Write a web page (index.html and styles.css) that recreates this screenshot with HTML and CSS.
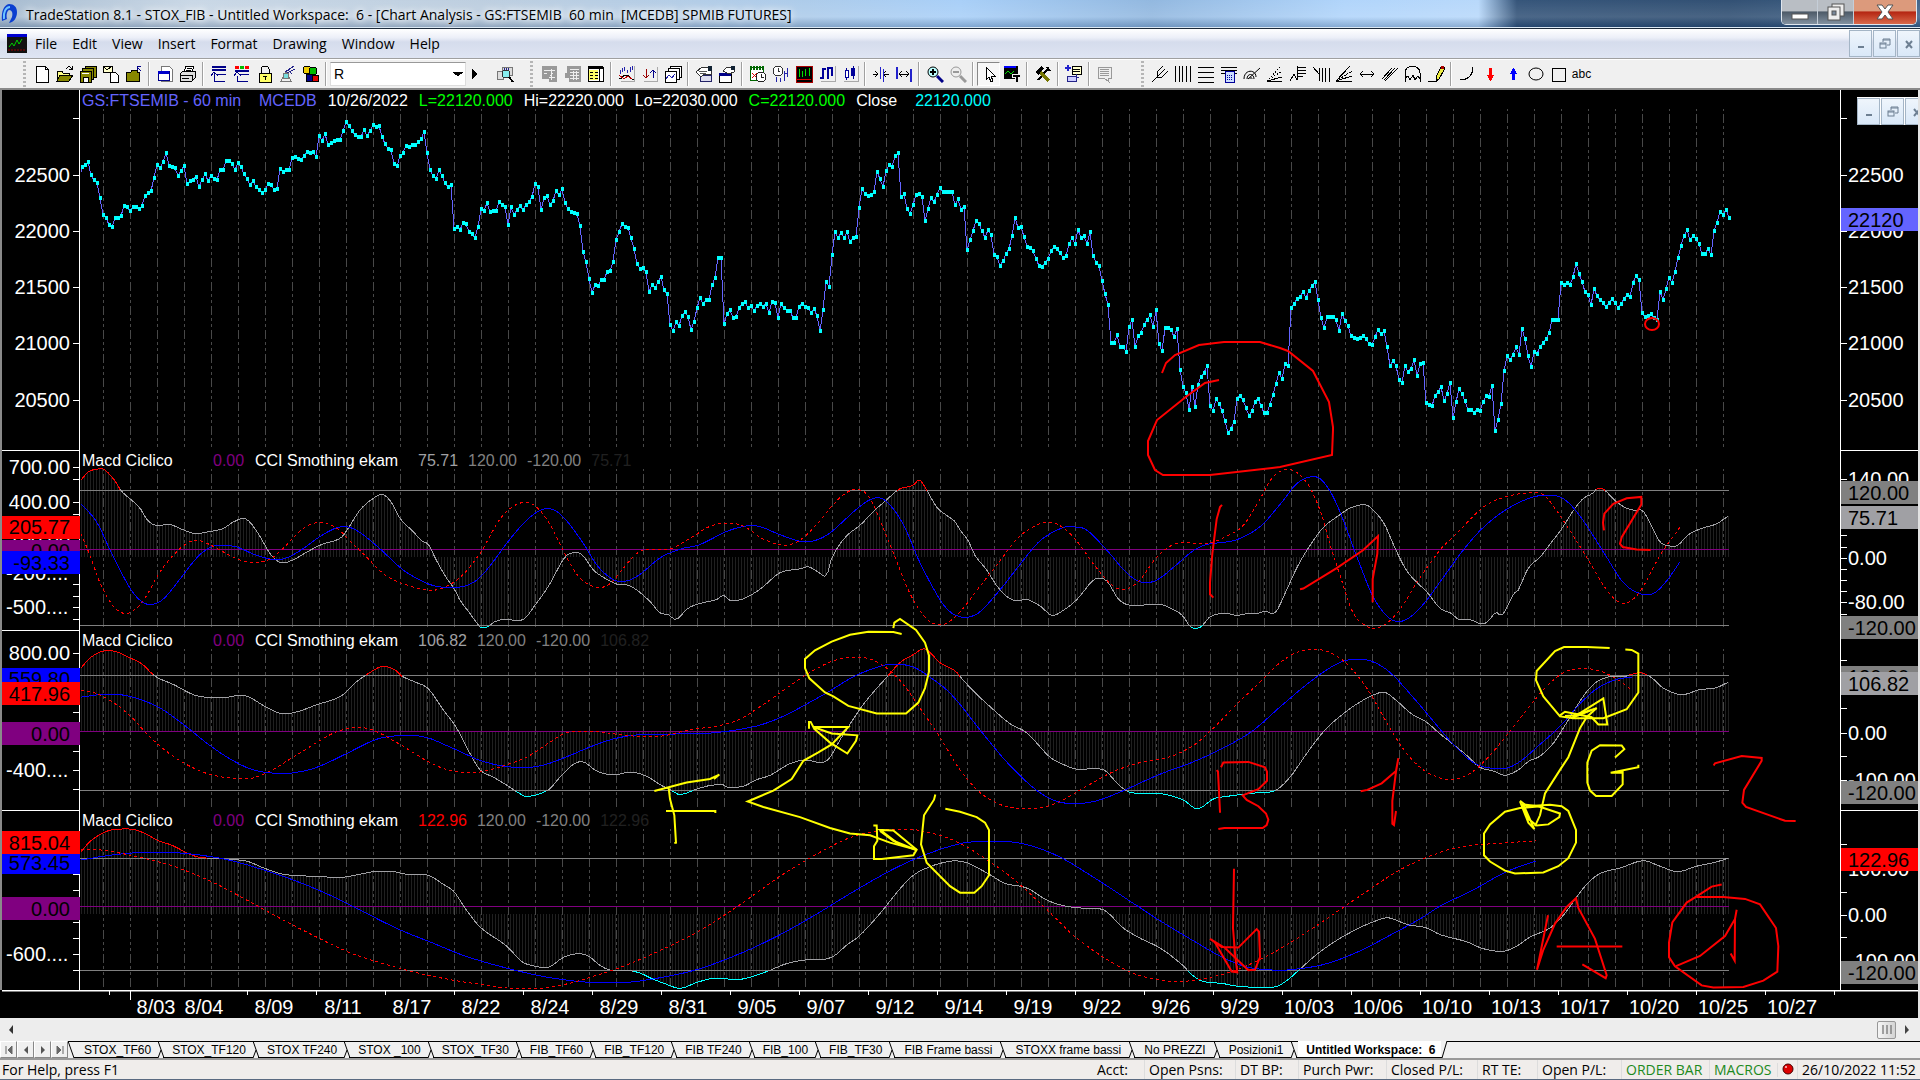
FILE: index.html
```html
<!DOCTYPE html>
<html lang="en">
<head>
  <meta charset="UTF-8">
  <meta name="viewport" content="width=device-width, initial-scale=1.0">
  <title>TradeStation 8.1 - STOX_FIB</title>
  <link rel="stylesheet" href="styles.css">
</head>
<body>
  <header class="titlebar">
    <svg class="app-icon" viewBox="0 0 18 22"><path d="M2 18C1 8 4 2 9 1c5 0 8 3 8 8 0 6-3 10-8 11l3-6c1-4 0-7-3-7-2 1-3 5-2 9z" fill="#0b3fd0"/><path d="M4 16C3 9 6 4 10 4" stroke="#6cc4ff" stroke-width="2" fill="none"/></svg>
    <h1 class="title">TradeStation 8.1 - STOX_FIB - Untitled Workspace:&nbsp; 6 - [Chart Analysis - GS:FTSEMIB&nbsp; 60 min&nbsp; [MCEDB] SPMIB FUTURES]</h1>
    <div class="win-buttons">
      <button class="win" aria-label="Minimize"><svg width="20" height="20"><rect x="2" y="12" width="16" height="5" fill="#fff" stroke="#555"/></svg></button>
      <button class="win" aria-label="Restore"><svg width="20" height="20" fill="#eee" stroke="#555"><rect x="6" y="2" width="12" height="12"/><rect x="2" y="5" width="12" height="13"/><rect x="6" y="9" width="4" height="4" fill="#78889a"/></svg></button>
      <button class="win win-close" aria-label="Close"><svg width="22" height="20"><path d="M3 3h5l3 4 3-4h5l-5 7 5 7h-5l-3-4-3 4H3l5-7z" fill="#fff" stroke="#555"/></svg></button>
    </div>
  </header>

  <nav class="menubar">
    <svg class="doc-icon" width="20" height="19"><rect width="20" height="19" fill="#111"/><rect width="20" height="3" fill="#0000d0"/><path d="M2 13l3-4 2 3 3-6 2 4 3-5" stroke="#0c0" fill="none"/><path d="M1 16h18" stroke="#900" stroke-dasharray="2 1"/></svg>
    <button>File</button><button>Edit</button><button>View</button><button>Insert</button><button>Format</button><button>Drawing</button><button>Window</button><button>Help</button>
    <div class="mdi">
      <button aria-label="Minimize chart"><svg width="12" height="12"><path d="M3 9h6" stroke="#6d7f92" stroke-width="2"/></svg></button>
      <button aria-label="Restore chart"><svg width="12" height="12" fill="none" stroke="#6d7f92"><path d="M4 4V1h7v6H8M4 2h7"/><rect x="1" y="5" width="6" height="5"/><path d="M1 6h6"/></svg></button>
      <button aria-label="Close chart"><svg width="12" height="12"><path d="M3 3l6 7M9 3l-6 7" stroke="#6d7f92" stroke-width="2"/></svg></button>
    </div>
  </nav>

  <div class="toolbar">
    <i class="grip grip-first"></i>
    <button title="New"><svg><path d="M3 1h9l3 3v13H3z" fill="#fff" stroke="#000"/><path d="M12 1v3h3" fill="none" stroke="#000"/></svg></button>
    <button title="Open"><svg><path d="M1 16V6h5l1 2h6v2" fill="#ff8" stroke="#000"/><path d="M1 16l3-6h13l-4 6z" fill="#880" stroke="#000"/><path d="M10 4c2-3 4-3 6 0m0-3v3h-3" fill="none" stroke="#000"/></svg></button>
    <button title="Save all"><svg fill="#880" stroke="#000"><rect x="6" y="1" width="11" height="11"/><rect x="3" y="3" width="11" height="11"/><rect x="1" y="6" width="11" height="11"/><rect x="4" y="12" width="5" height="5" fill="#fff"/><path d="M3 8h7" stroke="#fff"/></svg></button>
    <button title="Mail"><svg><rect x="1" y="1" width="9" height="6" fill="#ffc" stroke="#000"/><path d="M1 1l4 4 5-4" fill="none" stroke="#000"/><path d="M8 7h5l3 3v7H8z" fill="#fff" stroke="#000"/></svg></button>
    <button title="Close workspace"><svg><path d="M1 16V7h5l1-2h5v2h2v9z" fill="#880" stroke="#000"/><path d="M16 6l-4-4m0 3V1h4" fill="none" stroke="#008"/></svg></button>
    <i class="sep"></i>
    <button title="Preview"><svg><path d="M5 1h8l3 3v12H5z" fill="#fff" stroke="#777"/><rect x="2" y="6" width="11" height="9" fill="#fff" stroke="#008"/><path d="M2 7h11" stroke="#00c" stroke-width="3"/></svg></button>
    <button title="Print"><svg stroke="#000"><path d="M5 7l2-6h8l-2 6" fill="#fff"/><path d="M1 9l3-3h12v7l-3 3H1z" fill="#ddd"/><path d="M1 10h12v6M8 3h5M7 5h5M3 13h7" fill="none"/></svg></button>
    <i class="sep"></i>
    <button title="Format window"><svg fill="none" stroke="#008"><path d="M2 2h14M2 5h14" stroke-width="2"/><path d="M7 9h9M7 16h8M4 12v-4M1 11l3-4 4 4M4 11v5h3"/></svg></button>
    <button title="Format bars"><svg fill="none" stroke="#008"><path d="M2 6h14" stroke-width="2"/><path d="M2 2h4" stroke="red" stroke-width="3"/><path d="M7 2h4" stroke="#0b0" stroke-width="3"/><path d="M12 2h4" stroke="red" stroke-width="3"/><path d="M7 9h9M7 16h8M1 11l3-4 4 4M4 11v5h3"/></svg></button>
    <button title="Lock"><svg><path d="M5 8V4c0-4 8-4 8 0v4" fill="none" stroke="#000"/><rect x="3" y="8" width="12" height="9" fill="#ff6" stroke="#000"/><path d="M9 11v4M7 11h4" stroke="#000"/></svg></button>
    <button title="Connect"><svg fill="none" stroke="#777"><path d="M2 16l5-9 5 9zM4 13h6"/><path d="M6 7l9-6M8 8l8-4M9 5l4 4" stroke="#228"/><circle cx="7" cy="11" r="3" fill="#7dd"/></svg></button>
    <button title="Symbols"><svg stroke="#000"><circle cx="5" cy="5" r="4" fill="#ec0"/><circle cx="11" cy="6" r="4" fill="#0b0"/><rect x="4" y="9" width="6" height="7" fill="#008"/><rect x="10" y="10" width="6" height="6" fill="#d00"/></svg></button>
    <i class="sep"></i>
    <select class="symbol" aria-label="Symbol"><option>R</option></select>
    <button class="play" title="Go"><svg><path d="M6 4l5 5-5 5z" fill="#000"/></svg></button>
    <button class="lookup" title="Lookup"><svg><path d="M1 6h6v8H1zM6 2h10v8H6z" fill="#ddd" stroke="#777"/><path d="M8 3v6M10 3v6M12 3v6" stroke="#228"/><circle cx="10" cy="9" r="4" fill="#8ee" stroke="#333"/><path d="M13 12l4 5" stroke="#000" stroke-width="2"/></svg></button>
    <i class="grip"></i>
    <button title="Chart" disabled><svg><path d="M1 1h15v16H8v-3H1z" fill="#999"/><path d="M3 5h11M3 8h3M10 4v11M8 12h6M12 8l-3 3" stroke="#eee"/></svg></button>
    <button title="Matrix" disabled><svg><path d="M3 1h14v16H5v-4H1V8h2z" fill="#999"/><path d="M6 4h9M6 7h9M6 10h9M6 13h9M9 6v9M12 6v9" stroke="#eee"/></svg></button>
    <button title="Data window"><svg><rect x="1" y="2" width="15" height="14" fill="#fff" stroke="#000"/><rect x="1" y="1" width="15" height="3"/><rect x="2" y="5" width="9" height="10" fill="#ff6"/><path d="M3 7h3M8 7h3M3 10h3M8 10h3M3 13h3M8 13h3M12 4v12" stroke="#000"/></svg></button>
    <i class="sep"></i>
    <button title="Insert analysis"><svg fill="none"><path d="M16 1v15H3" stroke="#aaa"/><path d="M2 5v4M4 3v4M6 2v4M9 5v3M12 2v5M14 1v4" stroke="#22a"/><path d="M1 14c4 0 3-4 7-4s4 4 8 5" stroke="#000"/><path d="M1 10l5 4 4-3 4 3" stroke="#b00"/></svg></button>
    <button title="Sort"><svg fill="none"><path d="M16 2v14H3" stroke="#aaa"/><path d="M5 4v9m-3-3l3 3 3-3" stroke="#900"/><path d="M12 13V5m-3 3l3-3 3 3" stroke="#008"/></svg></button>
    <button title="Windows"><svg fill="#fff" stroke="#000"><rect x="6" y="1" width="11" height="11"/><rect x="4" y="3" width="11" height="11"/><rect x="1" y="6" width="11" height="11"/><path d="M2 14l3-4 3 3 3-4" fill="none" stroke="#22a"/></svg></button>
    <i class="sep"></i>
    <button title="Properties"><svg><path d="M5 10h11v6H5z" fill="#dde" stroke="#226"/><path d="M1 7l6-5h9v7H9l-3 3z" fill="#fff" stroke="#333"/><path d="M13 1h4v5h-4z" fill="#123"/><path d="M4 6h8M5 8h6" stroke="#555"/></svg></button>
    <button title="Format"><svg><rect x="1" y="8" width="12" height="9" fill="#fff" stroke="#000"/><path d="M1 9h12" stroke="#008" stroke-width="3"/><path d="M5 6l4-4h7v5l-5 2z" fill="#fff" stroke="#333"/><path d="M13 1h4v4h-4z" fill="#123"/></svg></button>
    <i class="sep"></i>
    <button title="Calendar"><svg><rect x="1" y="2" width="13" height="13" fill="#fff" stroke="#060"/><path d="M1 3h14" stroke="#060" stroke-width="4" stroke-dasharray="2 1"/><path d="M3 8l5 5M8 8l-5 5" stroke="#d00"/><circle cx="12" cy="12" r="5" fill="#fff" stroke="#222"/><path d="M12 9v3h3" fill="none" stroke="#222"/></svg></button>
    <button title="Interval"><svg fill="none"><circle cx="6" cy="6" r="5" stroke="#333" fill="#fff"/><path d="M6 3v3h2" stroke="#333"/><path d="M4 12v5M8 13v4M12 6v10M15 3v9M12 8h3" stroke="#22a"/></svg></button>
    <button title="Bars"><svg><rect x="1" y="1" width="16" height="16" fill="#000" stroke="#a00"/><path d="M4 4v8M7 6v6M10 4v7M14 3v8" stroke="#0d0"/><path d="M2 14h14" stroke="#d00"/></svg></button>
    <button title="OHLC"><svg fill="none"><path d="M17 1v15H3" stroke="#aaa"/><path d="M5 3v11M5 4h3M2 13h3M10 2v12M10 3h4M14 2v9" stroke="#009" stroke-width="2"/></svg></button>
    <button title="Candles"><svg fill="none"><path d="M17 1v15H3" stroke="#aaa"/><path d="M5 3v12M12 1v13" stroke="#009"/><rect x="4" y="5" width="3" height="7" fill="#fff" stroke="#009"/><rect x="10" y="3" width="4" height="8" fill="#009"/></svg></button>
    <i class="sep"></i>
    <button title="Less space"><svg fill="none" stroke="#000"><path d="M1 9h5M3 6l3 3-3 3M17 9h-5M14 6l-3 3 3 3"/><path d="M8 2v12M11 4v13" stroke="#22c"/></svg></button>
    <button title="More space"><svg fill="none" stroke="#000"><path d="M4 9h10M7 6L4 9l3 3M11 6l3 3-3 3"/><path d="M2 2v12M16 4v13" stroke="#22c" stroke-width="2"/></svg></button>
    <i class="sep"></i>
    <button title="Zoom in"><svg class="round"><circle cx="7" cy="7" r="5" fill="#bff" stroke="#000"/><path d="M4 7h6M7 4v6" stroke="#000" stroke-width="2"/><path d="M11 11l6 6" stroke="#008" stroke-width="3"/></svg></button>
    <button title="Zoom out" disabled><svg class="round"><circle cx="7" cy="7" r="5" fill="#eee" stroke="#999"/><path d="M4 7h6" stroke="#999" stroke-width="2"/><path d="M11 11l6 6" stroke="#999" stroke-width="3"/></svg></button>
    <i class="sep"></i>
    <button class="pressed" title="Pointer"><svg><path d="M6 2v13l3-3 2 5 2-1-2-5h4z" fill="#fff" stroke="#000"/></svg></button>
    <button title="Text"><svg><rect x="1" y="1" width="14" height="13" fill="#000"/><path d="M1 2h12" stroke="#00f" stroke-width="2"/><path d="M2 9l3-3 3 3 3-3" stroke="#0d0" fill="none"/><path d="M9 9h8v3h-2v5h-3v-5H9z" stroke="#eee"/></svg></button>
    <i class="sep"></i>
    <button title="Tools"><svg fill="none"><path d="M4 15L14 4M13 2l3 4" stroke="#000" stroke-width="2"/><path d="M5 6l10 10" stroke="#770" stroke-width="3"/><path d="M1 7l6-6 3 3-3 2-2 4z" fill="#000"/></svg></button>
    <i class="sep"></i>
    <button title="Add note"><svg><path d="M3 0v6M0 3h6" stroke="#22c" stroke-width="2"/><rect x="7" y="1" width="9" height="8" fill="#ffc" stroke="#000"/><path d="M8 4h7M8 6h7" stroke="#000"/><rect x="2" y="11" width="9" height="5" fill="#ccf" stroke="#228"/><path d="M11 9v3h3" fill="none" stroke="#228"/></svg></button>
    <i class="sep"></i>
    <button title="Comment" disabled><svg><path d="M2 2h13v11h-3l1 4-5-4H2z" fill="#eee" stroke="#999"/><path d="M4 4h9M4 6h9M4 8h9M4 10h9" stroke="#999"/></svg></button>
    <i class="grip grip-wide"></i>
    <button title="Pitchfork"><svg class="line"><path d="M1 17L9 9M6 12V7l6-6M6 12h5l6-6M9 9l5-5"/></svg></button>
    <button title="Vertical lines"><svg class="line"><path d="M1 1v16M5 1v16M8 1v16M12 1v16M16 1v16"/></svg></button>
    <button title="Horizontal lines"><svg class="line"><path d="M1 2h16M1 7h16M1 12h16M1 17h16"/></svg></button>
    <button title="Calculator"><svg><path d="M1 2h16M1 5h16M1 8h16" stroke="#000"/><rect x="5" y="6" width="9" height="11" fill="#cdf" stroke="#009"/><path d="M7 10h6M7 12h6M7 14h6" stroke="#009" stroke-dasharray="1 1"/></svg></button>
    <button title="Arcs"><svg class="line round"><path d="M1 14c0-10 12-10 12-2M4 14c0-6 7-6 7 0M7 14c0-2 2-2 2 0M5 14L17 3"/></svg></button>
    <button title="Gann fan"><svg class="line"><path d="M1 16h15M1 16L16 12"/><path d="M1 16L15 1M1 16L16 6" stroke-dasharray="1 2"/></svg></button>
    <button title="Retracement"><svg class="line"><path d="M1 16l4-7 3 6V1M9 2h8M9 5h8M9 8h8M9 11h5"/></svg></button>
    <button title="Time zones"><svg class="line"><path d="M1 2l6 7M7 3v13M10 3v14M13 3v14M17 3v14"/></svg></button>
    <button title="Speed lines"><svg class="line"><path d="M1 16h16M1 16L15 1M1 16L17 11"/><path d="M1 16L17 6" stroke-dasharray="2 1"/></svg></button>
    <button title="Extend"><svg class="line"><path d="M2 9h14M5 6L2 9l3 3M13 6l3 3-3 3"/></svg></button>
    <button title="Parallel"><svg class="line"><path d="M1 14L11 3M4 16L17 3M3 15L14 3"/></svg></button>
    <button title="Cycles"><svg class="line"><path d="M1 17V8c0-9 15-9 15 0v9M1 13l3-2 2 4 3-5 2 5 3-4 2 3"/></svg></button>
    <button title="Pencil"><svg><path d="M1 16h9" stroke="#000"/><path d="M9 16V12l5-10h3v3l-5 9z" fill="#ee4" stroke="#000"/><path d="M14 1h3v3h-3z" fill="#a00"/></svg></button>
    <i class="sep"></i>
    <button title="Arc"><svg class="line"><path d="M2 15c8 0 13-5 13-13"/></svg></button>
    <button title="Down arrow"><svg><path d="M8 3h3v7h2l-3 6h-1l-3-6h2z" fill="red"/></svg></button>
    <button title="Up arrow"><svg><path d="M8 15h3V9h2l-3-6h-1L6 9h2z" fill="#00f"/></svg></button>
    <button title="Ellipse"><svg class="line round"><ellipse cx="9" cy="9" rx="7" ry="6"/></svg></button>
    <button title="Rectangle"><svg class="line"><rect x="2" y="3" width="13" height="13"/></svg></button>
    <button class="abc" title="Label">abc</button>
  </div>

  <main class="chart">
    <svg class="axis axis-left" id="axisLeft"></svg>
    <div class="plots">
      <svg class="plot" id="plot" viewBox="80 90 1760 900" preserveAspectRatio="none"></svg>
      <div class="legend legend-price">
        <span class="sym">GS:FTSEMIB - 60 min</span><span class="sym2">MCEDB</span><span>10/26/2022</span><span class="up">L=22120.000</span><span>Hi=22220.000</span><span>Lo=22030.000</span><span class="up">C=22120.000</span><span class="close">Close</span><span class="last">22120.000</span>
      </div>
      <div class="legend">
        <span class="name">Macd Ciclico</span><span class="zero">0.00</span><span class="cci">CCI Smothing ekam</span><span class="val">75.71</span><span class="lim">120.00</span><span class="lim">-120.00</span><span class="dim">75.71</span>
      </div>
      <div class="legend">
        <span class="name">Macd Ciclico</span><span class="zero">0.00</span><span class="cci">CCI Smothing ekam</span><span class="val">106.82</span><span class="lim">120.00</span><span class="lim">-120.00</span><span class="dim">106.82</span>
      </div>
      <div class="legend">
        <span class="name">Macd Ciclico</span><span class="zero">0.00</span><span class="cci">CCI Smothing ekam</span><span class="hot">122.96</span><span class="lim">120.00</span><span class="lim">-120.00</span><span class="dim">122.96</span>
      </div>
    </div>
    <svg class="axis axis-right" id="axisRight"></svg>
    <svg class="dates" id="dates"></svg>
    <svg class="ink" id="ink" viewBox="0 90 1920 928" preserveAspectRatio="none"></svg>
    <div class="mdi mdi-float">
      <button aria-label="Minimize"><svg width="12" height="12"><path d="M3 9h6" stroke="#6d7f92" stroke-width="2"/></svg></button>
      <button aria-label="Restore"><svg width="12" height="12" fill="none" stroke="#6d7f92"><path d="M4 4V1h7v6H8M4 2h7"/><rect x="1" y="5" width="6" height="5"/><path d="M1 6h6"/></svg></button>
      <button aria-label="Close"><svg width="12" height="12"><path d="M3 3l6 7M9 3l-6 7" stroke="#6d7f92" stroke-width="2"/></svg></button>
    </div>
  </main>

  <div class="scrollbar">
    <button aria-label="Scroll left"><svg width="8" height="10"><path d="M6 0v9L2 5z" fill="#333"/></svg></button>
    <button class="thumb" aria-label="Scroll thumb"><svg width="12" height="9"><path d="M2 0v9M6 0v9M10 0v9" stroke="#555"/></svg></button>
    <button aria-label="Scroll right"><svg width="8" height="10"><path d="M2 0v9l4-4z" fill="#444"/></svg></button>
  </div>

  <div class="tabs">
    <div class="tab-nav">
      <button aria-label="First"><svg width="8" height="8"><path d="M1 0v8M7 0v8L3 4z" stroke="#666" fill="#666"/></svg></button>
      <button aria-label="Previous"><svg width="8" height="8"><path d="M6 0v8L2 4z" fill="#555"/></svg></button>
      <button aria-label="Next"><svg width="8" height="8"><path d="M2 0v8l4-4z" fill="#555"/></svg></button>
      <button aria-label="Last"><svg width="8" height="8"><path d="M7 0v8M1 0v8l4-4z" stroke="#666" fill="#666"/></svg></button>
    </div>
    <div class="tab-list" id="tabs"></div>
  </div>

  <footer class="status">
    <span class="help">For Help, press F1</span>
    <span class="w47">Acct:</span><span class="w91">Open Psns:</span><span class="w63">DT BP:</span><span class="w88">Purch Pwr:</span><span class="w91">Closed P/L:</span><span class="w60">RT TE:</span><span class="w84">Open P/L:</span><span class="w88 green">ORDER BAR</span><span class="w68 green">MACROS</span>
    <span class="w20"><svg width="12" height="14"><circle cx="6" cy="6" r="5" fill="#d00" stroke="#400"/><circle cx="4" cy="4" r="1" fill="#fcc"/></svg></span>
    <span class="clock">26/10/2022 11:52</span>
  </footer>
  <div class="taskbar"></div>
  <script src="chart.js"></script>
</body>
</html>
```
FILE: styles.css
```css
* {
  box-sizing: border-box;
}

body {
  margin: 0;
  min-height: 100vh;
  display: flex;
  flex-direction: column;
  background: #f0f0f0;
  font-family: "Open Sans", "Noto Sans", sans-serif;
  font-size: 14px;
  color: #000;
  overflow: hidden;
}

button {
  font: inherit;
  color: inherit;
  padding: 0;
  border: none;
  background: none;
}

svg {
  display: block;
  flex: none;
}

/* title bar */
.titlebar {
  display: flex;
  align-items: center;
  height: 29px;
  border-bottom: 1px solid #1c2a3a;
  box-shadow: inset 0 -1px 0 #dbe8f4;
  background:
    linear-gradient(rgba(255, 255, 255, 0.1), rgba(255, 255, 255, 0.2) 60%, rgba(40, 70, 110, 0.3)),
    linear-gradient(90deg, #9db4cb 0, #c3d3e3 10%, #b6c9dc 25%, #a4c6e8 42%, #9fcaf7 50%, #86b0dc 60%, #a8d0fa 70%, #b0d4fa 77%, #1f426b 79%, #1b3d64 90%, #2d537d 100%);
}

.app-icon {
  width: 18px;
  height: 22px;
}

.title {
  margin: 0 auto 0 8px;
  font-size: 14px;
  font-weight: normal;
  white-space: nowrap;
  text-shadow: 0 0 6px #fff, 0 0 10px #fff;
}

.win-buttons {
  display: flex;
  align-self: flex-start;
  margin-right: 3px;
  border: 1px solid #dfe6ee;
  border-top: none;
  border-radius: 0 0 5px 5px;
  overflow: hidden;
}

.win {
  display: grid;
  place-items: center;
  width: 36px;
  height: 24px;
  border-right: 1px solid #c5ced8;
  background: linear-gradient(#b9bec4 45%, #4d5a68 50%, #8291a0);
}

.win-close {
  width: 62px;
  border: none;
  background: linear-gradient(#dc9a7c 45%, #b52612 50%, #d9694a);
}

/* menu */
.menubar {
  display: flex;
  align-items: center;
  height: 30px;
  padding-left: 7px;
  border-bottom: 1px solid #a0a0a0;
  background: linear-gradient(#fff, #eceff8 30%, #d5dcec 45%, #dfe5f3);
}

.doc-icon {
  margin-right: 1px;
}

.menubar > button {
  padding: 0 8px 0 7px;
}

.mdi {
  display: flex;
  gap: 1px;
  margin-left: auto;
}

.mdi button {
  display: grid;
  place-items: center;
  width: 23px;
  height: 27px;
  border: 1px solid #a4b5c6;
  background: linear-gradient(#eff5fc, #d9e8f8);
}

/* tool bar */
.toolbar {
  display: flex;
  align-items: center;
  height: 31px;
  border-top: 1px solid #fff;
  border-bottom: 2px solid #8a8a8a;
  background: #f0f0f0;
}

.toolbar button {
  display: grid;
  place-items: center;
  flex: none;
  width: 23px;
  height: 24px;
}

.toolbar svg {
  width: 18px;
  height: 18px;
  shape-rendering: crispEdges;
}

.toolbar .round {
  shape-rendering: auto;
}

.toolbar .line {
  fill: none;
  stroke: #000;
}

.toolbar .pressed {
  border: 1px solid;
  border-color: #888 #fff #fff #888;
  background: #f8f8f8;
}

.toolbar .play {
  width: 18px;
}

.toolbar .lookup {
  margin: 0 14px 0 9px;
}

.toolbar .abc {
  font: 12px "Liberation Sans", Arial, sans-serif;
}

.sep {
  flex: none;
  width: 2px;
  height: 24px;
  margin: 0 3px;
  border-left: 1px solid #a0a0a0;
  border-right: 1px solid #fff;
}

.grip {
  flex: none;
  width: 3px;
  height: 26px;
  margin-right: 5px;
  background: repeating-linear-gradient(#b5b5b5 0 2px, #f0f0f0 2px 4px);
}

.grip-first {
  margin-left: 23px;
  margin-right: 4px;
}

.grip-wide {
  margin-left: 25px;
  margin-right: 4px;
}

.symbol {
  flex: none;
  width: 136px;
  height: 24px;
  padding: 0 0 0 3px;
  border: 1px solid #ddd;
  border-top-color: #999;
  border-radius: 0;
  appearance: none;
  background: linear-gradient(45deg, transparent 50%, #000 50%) 122px 9px / 5px 5px no-repeat, linear-gradient(-45deg, transparent 50%, #000 50%) 127px 9px / 5px 5px no-repeat, #fff;
  font: 14px "Liberation Sans", Arial, sans-serif;
}

/* chart */
.chart {
  position: relative;
  display: grid;
  grid-template-columns: 80px 1fr 78px;
  grid-template-rows: 900px 28px;
  border-right: 2px solid #e3e3e3;
  background: #000;
  color: #fff;
  font-family: "Liberation Sans", Arial, sans-serif;
  overflow: hidden;
}

.axis {
  width: 100%;
  height: 900px;
}

.axis text,
.dates text {
  font-size: 20px;
  fill: #fff;
}

.axis .on-box {
  fill: #000;
}

.plots {
  position: relative;
  display: grid;
  grid-template-rows: 360px repeat(3, 180px);
}

.plot {
  position: absolute;
  inset: 0;
  width: 100%;
  height: 100%;
  shape-rendering: crispEdges;
}

.legend {
  position: relative;
  display: flex;
  align-items: flex-start;
  padding-left: 2px;
  font-size: 16px;
  line-height: 21px;
  white-space: nowrap;
}

.legend span {
  padding-right: 10px;
}

.legend-price span {
  padding-right: 11px;
}

.legend .name { min-width: 131px; }
.legend .zero { min-width: 42px; color: #800080; }
.legend .cci { min-width: 163px; }
.legend .val { color: #a0a0a4; }
.legend .lim { color: #808080; }
.legend .dim { color: #202020; }
.legend .hot { color: #f00; }
.legend .sym { min-width: 177px; color: #6464ff; }
.legend .sym2 { color: #6464ff; }
.legend .up { color: #0f0; }
.legend .close { min-width: 59px; }
.legend .last { color: #0ff; }

.dates {
  grid-column: 1 / -1;
  width: 100%;
  height: 28px;
}

.ink {
  position: absolute;
  inset: 0;
  width: calc(100% + 2px);
  height: 100%;
  fill: none;
  stroke-width: 2;
  pointer-events: none;
}

.mdi-float {
  position: absolute;
  top: 7px;
  right: -10px;
  border-top: 1px solid #fff;
  background: #fff;
}

/* scroll bar */
.scrollbar {
  display: flex;
  align-items: center;
  height: 23px;
  padding: 0 9px 0 7px;
  background: #ededed;
}

.thumb {
  display: grid;
  place-items: center;
  width: 19px;
  height: 18px;
  margin: 0 7px 0 auto;
  border: 1px solid #979797;
  border-radius: 2px;
  background: linear-gradient(90deg, #f5f5f5, #d4d4d4);
}

/* workspace tabs */
.tabs {
  display: flex;
  height: 19px;
  border-bottom: 2px solid #999;
  font: 12px "Liberation Sans", Arial, sans-serif;
}

.tab-nav {
  display: flex;
}

.tab-nav button {
  display: grid;
  place-items: center;
  width: 17px;
  border: 1px solid;
  border-color: #fff #888 #888 #fff;
}

.tab-list {
  display: flex;
  flex: 1;
}

.tab {
  height: 17px;
  padding: 0 5px 0 7px;
  border-top: 1px solid #000;
  border-bottom: 1px solid #000;
  white-space: nowrap;
}

.tab-wide {
  padding: 0 6px 0 8px;
}

.tab-edge {
  width: 9px;
  height: 17px;
  fill: none;
  stroke: #000;
}

.tab-active {
  border-top-color: #fff;
  background: #fff;
  font-weight: bold;
}

.tab-rest {
  flex: 1;
  border-top: 1px solid #000;
}

/* status */
.status {
  display: flex;
  align-items: center;
  height: 19px;
  padding-right: 2px;
  background: #f0edeb;
  line-height: 19px;
  white-space: nowrap;
}

.status span {
  flex: none;
  padding-left: 4px;
  border-left: 1px solid #ddd;
}

.status .help {
  flex: 1;
  padding-left: 2px;
  border: none;
}

.w20 { width: 20px; }
.w47 { width: 47px; }
.w60 { width: 60px; }
.w63 { width: 63px; }
.w68 { width: 68px; }
.w84 { width: 84px; }
.w88 { width: 88px; }
.w91 { width: 91px; }
.clock { width: 121px; }
.green { color: #1d8a1d; }

.status .w47 { border: none; padding-left: 0; }

.taskbar {
  flex: 1;
  background: #5a6a80;
}
```
FILE: chart.js
```js
// Each study series is stored in four strips of 1440 units, three units per pixel
const STRIP = 1440;
const X = v => v / 3;
const Y = v => v / 2.751 + 430;
const NS = "http://www.w3.org/2000/svg";

function add(parent, tag, attrs, text) {
  const el = document.createElementNS(NS, tag);
  for (const k in attrs) el.setAttribute(k, attrs[k]);
  if (text !== undefined) el.textContent = text;
  parent.appendChild(el);
  return el;
}

function pairs(str, strip) {
  return str.trim().split(/\s+/).map(p => {
    const [x, y] = p.split(",").map(Number);
    return [X(x + strip * STRIP), Y(y)];
  });
}

// sample the series every 3px with a smooth interpolation
function sample(strips) {
  const pts = strips.flatMap((s, i) => pairs(s, i));
  const n = pts.length;
  const m = pts.map((p, i) => {
    const a = pts[Math.max(0, i - 1)], b = pts[Math.min(n - 1, i + 1)];
    return (b[1] - a[1]) / (b[0] - a[0]);
  });
  const out = [];
  let i = 0;
  for (let x = 81; x <= pts[n - 1][0] + 1; x += 3) {
    while (i < n - 2 && pts[i + 1][0] < x) i++;
    const [x0, y0] = pts[i], [x1, y1] = pts[i + 1], h = x1 - x0;
    const t = Math.min(1, Math.max(0, (x - x0) / h)), t2 = t * t, t3 = t2 * t;
    out.push([x, (2 * t3 - 3 * t2 + 1) * y0 + (t3 - 2 * t2 + t) * h * m[i] + (3 * t2 - 2 * t3) * y1 + (t3 - t2) * h * m[i + 1]]);
  }
  return out;
}

const line = pts => pts.map(p => p[0] + "," + p[1].toFixed(1)).join(" ");

const studies = [
  {
    top: 469, base: 557, mid: 549, hi: 490, lo: 625,
    cci: [
      "243,138 265,115 290,108 312,108 345,140 363,167 400,197 420,215 440,245 465,262 510,260 545,273 585,285 625,280 670,271 700,253 738,245 775,285 810,340 842,365 880,357 920,336 965,315 1022,297 1045,270 1080,220 1120,188 1148,177 1175,200 1200,243 1240,280 1265,305 1285,315 1310,360 1340,408 1362,436 1380,468 1410,505 1438,540",
      "5,544 22,542 45,527 75,521 130,521 165,482 205,430 255,350 285,337 308,345 340,385 370,405 410,424 440,426 470,440 510,472 540,503 565,508 588,521 625,490 665,476 710,466 733,454 745,467 785,466 840,438 895,395 920,387 960,382 985,376 1010,388 1040,401 1050,365 1075,320 1105,287 1140,262 1185,220 1220,192 1250,167 1265,160 1300,152 1318,137 1340,165 1370,212 1400,235 1425,252 1440,275",
      "25,305 45,345 80,385 110,428 140,458 170,470 200,466 240,484 275,510 300,502 350,467 400,413 425,408 445,420 475,465 510,482 600,480 640,494 668,511 690,540 708,546 725,540 750,514 795,504 830,510 870,504 890,506 915,498 945,503 975,450 1010,380 1045,325 1090,268 1140,233 1170,215 1218,206 1250,230 1275,262 1305,325 1340,387 1375,423 1400,445 1440,490",
      "35,505 55,521 90,522 130,534 150,520 167,502 185,510 200,490 220,452 235,440 265,380 300,350 325,320 365,272 400,222 430,188 455,176 475,160 495,166 520,190 555,213 585,221 608,222 635,265 660,308 685,318 712,318 745,288 790,269 830,258 867,235"
    ],
    slow: [
      "243,203 290,253 330,330 390,435 425,472 455,480 490,465 540,410 590,352 630,323 665,317 710,322 760,341 810,355 850,355 900,332 960,293 1010,269 1045,267 1080,282 1140,327 1200,378 1240,403 1300,428 1370,433 1410,424 1440,405",
      "40,362 90,300 150,240 200,216 245,235 310,312 350,371 400,412 440,415 480,397 540,352 600,328 660,315 740,279 800,264 840,266 900,288 960,306 1005,304 1050,283 1140,210 1185,187 1220,197 1270,260 1320,365 1380,467 1410,500 1440,514",
      "25,515 60,500 120,440 180,370 240,305 310,268 345,267 380,275 440,330 500,393 545,419 590,413 640,378 700,332 740,315 780,310 830,302 900,266 960,205 1010,148 1050,129 1080,134 1110,168 1140,225 1190,347 1240,460 1285,515 1320,527 1360,508 1400,468 1440,418",
      "70,330 130,268 200,218 270,187 320,179 365,186 400,214 440,263 500,350 550,420 600,450 640,450 680,415 722,360"
    ],
    fast: [
      "243,285 270,345 300,420 340,485 375,505 410,490 440,455 480,390 530,335 570,307 600,305 640,320 700,350 755,365 810,355 850,325 900,278 930,260 965,255 1010,270 1050,305 1100,350 1150,395 1200,420 1290,441 1340,430 1390,397 1440,340",
      "10,325 60,245 100,210 135,199 170,212 210,260 260,350 300,408 350,433 390,423 430,380 470,340 500,329 570,327 630,298 690,265 740,256 790,264 850,300 915,317 960,303 1010,260 1060,205 1100,172 1135,164 1170,188 1230,315 1290,450 1340,520 1380,536 1410,526 1440,500",
      "10,490 60,430 120,360 170,300 220,266 265,253 305,266 350,305 410,380 460,430 500,437 540,412 590,350 640,315 680,310 740,313 800,292 850,262 900,190 940,128 990,108 1040,145 1080,220 1110,315 1140,400 1180,505 1220,540 1240,547 1280,532 1320,493 1370,420 1440,330",
      "50,285 130,212 200,183 280,172 310,178 350,222 430,335 500,440 545,477 580,465 610,430 660,345 722,265"
    ]
  },
  {
    top: 649, base: 731, mid: 731, hi: 675, lo: 790,
    cci: [
      "243,655 270,627 310,608 345,609 390,627 425,643 465,677 520,700 590,731 670,736 735,731 800,763 840,779 880,778 950,756 1025,731 1065,696 1105,670 1148,650 1185,660 1205,677 1250,695 1285,712 1330,770 1370,820 1410,890 1440,935",
      "40,955 80,977 110,995 140,1008 205,990 240,955 280,920 310,913 350,938 400,949 455,941 500,953 545,978 575,992 600,1003 650,988 690,978 733,976 740,983 790,980 830,962 870,950 930,918 975,908 1040,910 1085,845 1150,755 1225,675 1260,640 1300,618 1335,602 1380,640 1425,662 1440,678",
      "40,718 95,765 150,808 200,833 270,900 310,920 350,933 400,932 435,937 475,975 510,997 600,1000 670,1018 705,1041 725,1038 760,1015 800,1008 880,999 945,992 990,955 1040,890 1095,825 1140,788 1180,760 1235,731 1275,722 1310,745 1355,781 1400,804 1440,836",
      "40,865 80,895 120,928 160,938 195,950 235,935 265,912 300,897 340,862 370,820 400,775 440,720 475,690 520,677 550,679 575,672 605,668 640,685 670,710 725,728 780,714 825,710 867,693"
    ],
    slow: [
      "243,735 300,728 350,727 410,738 480,765 550,810 630,868 700,910 760,935 820,944 880,943 950,928 1040,890 1110,858 1150,846 1220,840 1280,846 1340,868 1400,893 1440,909",
      "60,923 130,929 190,922 260,899 330,872 400,850 480,838 600,836 700,833 790,822 850,809 920,783 1040,723 1120,679 1190,653 1240,644 1300,652 1350,680 1400,715 1440,755",
      "60,825 140,913 220,984 280,1018 340,1028 410,1020 480,996 600,947 700,913 800,870 880,826 960,762 1040,700 1100,660 1150,636 1200,631 1240,638 1290,667 1360,736 1440,823",
      "40,865 100,915 150,930 200,930 240,912 300,865 360,815 420,753 470,712 530,686 580,680"
    ],
    fast: [
      "243,716 290,725 350,756 400,795 450,845 520,898 590,934 650,952 710,958 755,958 800,943 880,900 950,860 1010,830 1070,818 1120,826 1200,865 1290,915 1350,937 1410,943 1440,941",
      "60,927 140,900 200,865 250,836 300,829 360,831 420,838 500,844 560,840 620,826 720,813 780,795 850,755 920,710 990,667 1060,635 1120,625 1170,630 1220,655 1270,700 1320,765 1380,845 1440,935",
      "60,997 120,1030 180,1041 240,1039 300,1022 380,980 460,940 540,915 620,902 700,868 760,820 830,755 900,693 960,640 1010,612 1060,603 1110,612 1160,643 1220,710 1290,820 1340,890 1390,935 1440,957",
      "40,962 90,945 140,905 200,840 260,770 320,705 370,668 420,656 480,663 530,685 580,718"
    ]
  },
  {
    top: 829, base: 914, mid: 906, hi: 858, lo: 970,
    cci: [
      "243,1160 275,1128 320,1104 360,1098 400,1099 435,1110 475,1130 515,1142 560,1163 595,1175 650,1179 700,1182 740,1186 800,1208 850,1222 920,1227 1030,1230 1080,1222 1130,1214 1180,1215 1220,1222 1285,1225 1330,1250 1362,1270 1395,1315 1440,1367",
      "80,1420 125,1462 160,1474 205,1478 250,1451 290,1441 325,1447 360,1473 395,1487 440,1486 480,1494 520,1511 560,1525 600,1536 650,1520 690,1510 735,1508 755,1513 800,1508 860,1490 920,1468 985,1457 1035,1456 1065,1445 1100,1417 1140,1390 1200,1330 1260,1262 1300,1225 1345,1203 1390,1190 1425,1185 1440,1187",
      "20,1190 80,1218 135,1247 200,1260 265,1295 330,1312 400,1317 435,1322 490,1370 540,1398 600,1425 665,1470 700,1502 730,1517 790,1523 830,1530 890,1533 945,1532 980,1515 1020,1483 1070,1443 1120,1410 1180,1378 1240,1353 1285,1342 1340,1360 1400,1370 1440,1388",
      "80,1408 130,1427 190,1434 230,1420 270,1395 330,1370 370,1335 410,1285 440,1250 480,1220 540,1205 610,1185 660,1200 712,1215 770,1200 830,1188 867,1177"
    ],
    slow: [
      "243,1183 330,1170 430,1162 530,1163 620,1172 700,1186 800,1213 900,1245 1000,1284 1100,1330 1200,1375 1300,1412 1380,1442 1440,1460",
      "100,1485 200,1505 320,1519 430,1520 520,1510 640,1487 760,1448 880,1398 1000,1337 1120,1270 1240,1208 1340,1167 1440,1138",
      "60,1132 140,1132 210,1143 300,1175 400,1230 500,1290 600,1350 700,1405 780,1447 860,1477 950,1486 1020,1482 1100,1468 1200,1433 1300,1385 1380,1345 1440,1310",
      "100,1265 200,1215 290,1185"
    ],
    fast: [
      "243,1153 300,1155 360,1164 440,1180 530,1203 640,1245 750,1298 850,1348 950,1395 1050,1438 1150,1468 1250,1493 1350,1512 1440,1525",
      "80,1535 180,1536 260,1524 340,1503 430,1475 540,1432 650,1382 770,1312 900,1228 1000,1172 1100,1125 1180,1105 1280,1098 1360,1110 1440,1137",
      "80,1182 160,1235 250,1310 340,1390 430,1450 520,1495 600,1513 660,1517 730,1510 830,1485 950,1433 1080,1357 1200,1282 1320,1210 1440,1162",
      "80,1144 180,1137 290,1130"
    ]
  }
];

// closing prices, one per bar, a third of a pixel below the panel top
const closes = `232 226 216 255 271 279 324
374 383 404 411 383 383 378 347 352 363 350 352 357 347 318 308 303 263
224 234 215 188 227 231 234 257 242 228 282 272 269 260 291 269 252 272
257 266 270 239 239 212 212 222 240 218 231 252 267 285 272 291 300 309
300 281 284 300 297 236 246 239 239 203 201 207 210 198 185 188 186 201
137 153 131 165 159 153 150 150 123 95 107 123 135 141 141 119 138 123
104 111 107 141 161 176 180 221 228 198 188 167 171 165 165 156 147 126
188 240 258 267 240 258 279 291 285 416 410 420 398 402 426 432 444 410
356 363 338 366 363 363 335 345 351 405 351 375 360 348 360 345 336 321
281 291 360 324 317 345 333 302 315 296 339 357 366 369 372 408 486 516
567 609 584 588 570 570 545 543 515 450 426 401 410 413 444 477 521 536
534 546 605 585 594 576 560 600 611 704 722 695 708 677 665 681 719 695
654 623 641 630 630 585 564 503 503 702 671 660 684 681 654 641 636 653
648 663 647 641 650 641 669 635 638 684 641 654 662 662 684 684 650 641
650 653 668 657 677 722 660 576 591 495 426 443 429 443 426 456 443 441
354 296 311 318 315 306 245 267 291 242 225 231 198 188 321 311 356 371
345 314 311 321 393 357 323 336 314 293 306 306 306 306 345 327 359 350
480 450 423 392 402 423 443 420 435 494 500 527 513 492 477 437 383 413
411 440 470 474 483 507 527 531 519 507 483 470 477 489 503 497 461 443
462 419 443 438 462 426 497 518 527 573 611 645 759 759 735 771 771 786
711 690 771 738 729 705 690 675 711 660 762 783 714 714 719 741 716 839
890 909 959 890 950 884 860 848 828 947 963 926 942 962 993 1028 1017 995
926 917 930 954 977 962 935 926 947 968 968 944 914 881 848 867 821 828
653 641 627 621 605 623 603 588 576 630 683 714 681 681 681 690 722 671
692 708 738 744 747 744 738 747 762 765 741 719 732 722 771 827 812 827
869 879 827 845 836 809 857 821 819 938 945 948 917 905 890 933 912 878
984 936 896 911 933 959 959 968 959 963 936 917 920 887 1022 989 941 843
797 809 795 771 795 716 747 797 831 785 791 771 759 747 729 690 690 690
578 585 578 585 561 521 551 576 605 615 645 596 618 630 638 651 639 627
639 654 641 627 615 621 579 557 570 668 681 677 671 683 690 605 630 597
563 579 545 503 467 437 419 450 437 446 461 492 492 476 495 423 398 365
374 359 383`.split(/\s+/).map((v, i) => [82 + i * 3, v / 3 + 90]);

const plot = document.getElementById("plot");

// day grid
let grid = "";
for (let x = 103; x <= 1723; x += 27) {
  grid += `M${x}.5 109V447M${x}.5 469V627M${x}.5 649V807M${x}.5 829V987`;
}
add(plot, "path", { d: grid, stroke: "#484848", "stroke-dasharray": "9 3 3 3 3 3", "stroke-dashoffset": 19 });

add(plot, "polyline", { points: "81,172 " + line(closes), fill: "none", stroke: "#6464ff" });
add(plot, "path", { d: closes.map(p => `M${p[0] - 1} ${Math.round(p[1]) - 2}h3v4h-3z`).join(""), fill: "#0ff" });

for (const s of studies) {
  const cci = sample(s.cci);
  add(plot, "path", { d: cci.map(p => `M${p[0] + 0.5} ${s.base}V${p[1].toFixed(0)}`).join(""), stroke: "#202020" });
  add(plot, "path", { d: `M80 ${s.hi}.5H1729M80 ${s.lo}.5H1729`, stroke: "#808080" });
  add(plot, "path", { d: `M80 ${s.mid}.5H1729`, stroke: "#800080" });
  const paths = { "#a0a0a4": "", "#f00": "", "#0ff": "" };
  for (let i = 1; i < cci.length; i++) {
    const y = (cci[i - 1][1] + cci[i][1]) / 2;
    const color = y < s.hi ? "#f00" : y > s.lo + 1 ? "#0ff" : "#a0a0a4";
    paths[color] += `M${cci[i - 1]}L${cci[i]}`;
  }
  for (const c in paths) add(plot, "path", { d: paths[c], stroke: c, fill: "none" });
  add(plot, "polyline", { points: line(sample(s.slow)), fill: "none", stroke: "#00f" });
  add(plot, "polyline", { points: line(sample(s.fast)), fill: "none", stroke: "#f00", "stroke-dasharray": "3 3" });
}

// price scales, positions in page pixels; boxes are [top, bottom, fill, text, text centre]
const left = {
  ticks: [118, 175, 231, 287, 343, 400, 467, 479, 502, 514, 584, 596, 607, 619, 653, 712, 751, 770, 789, 874, 890, 922, 938, 954, 970],
  labels: [[175, "22500"], [231, "22000"], [287, "21500"], [343, "21000"], [400, "20500"], [467, "700.00"], [502, "400.00"], [538, "100.00"], [573, "-200...."], [607, "-500...."], [653, "800.00"], [770, "-400...."], [954, "-600...."]],
  boxes: [[516, 539, "#f00", "205.77", 527], [540, 563, "#800080", "0.00", 551], [551, 574, "#00f", "-93.33", 563], [668, 690, "#00f", "559.80", 679], [682, 705, "#f00", "417.96", 694], [722, 745, "#800080", "0.00", 734], [854, 874, "#00f", "573.45", 863], [831, 854, "#f00", "815.04", 843], [897, 920, "#800080", "0.00", 909]],
  rules: [450, 630, 810]
};
const right = {
  ticks: [118, 175, 231, 287, 343, 400, 479, 535, 547, 558, 569, 580, 591, 602, 614, 660, 708, 733, 756, 780, 844, 892, 915, 937, 961],
  labels: [[175, "22500"], [231, "22000"], [287, "21500"], [343, "21000"], [400, "20500"], [479, "140.00"], [558, "0.00"], [602, "-80.00"], [733, "0.00"], [780, "-100.00"], [869, "100.00"], [915, "0.00"], [961, "-100.00"]],
  boxes: [[208, 231, "#6464ff", "22120", 220], [481, 504, "#808080", "120.00", 493], [506, 529, "#a0a0a4", "75.71", 518], [616, 639, "#808080", "-120.00", 628], [666, 680, "#808080", "120.00", 677], [672, 695, "#a0a0a4", "106.82", 684], [781, 804, "#808080", "-120.00", 793], [848, 871, "#f00", "122.96", 860], [961, 984, "#808080", "-120.00", 973]],
  rules: [450, 810]
};

function drawAxis(id, d, isLeft) {
  const svg = document.getElementById(id);
  const tx = isLeft ? 70 : 8;
  const anchor = isLeft ? "end" : "start";
  add(svg, "path", { d: `M${isLeft ? 80 : 0} 0V900`, stroke: "#fff", "stroke-width": 2 });
  if (isLeft) add(svg, "path", { d: "M1 0V900", stroke: "#8a8a8a", "stroke-width": 2 });
  add(svg, "path", { d: d.rules.map(y => `M${isLeft ? 2 : 0} ${y - 89.5}H80`).join(""), stroke: "#fff" });
  add(svg, "path", { d: d.ticks.map(y => `M${isLeft ? 73 : 0} ${y - 89.5}h7`).join(""), stroke: "#fff" });
  const text = (y, t, cls) => {
    const dots = t.includes("....");
    add(svg, "text", { x: dots ? 6 : tx, y: y - 83, "text-anchor": dots ? "start" : anchor, class: cls }, t);
  };
  d.labels.forEach(([y, t]) => text(y, t, ""));
  for (const [top, bottom, fill, t, mid] of d.boxes) {
    add(svg, "rect", { x: isLeft ? 2 : 1, y: top - 90, width: 78, height: bottom - top, fill });
    text(mid, t, "on-box");
  }
}
drawAxis("axisLeft", left, true);
drawAxis("axisRight", right, false);

// date scale
const dates = document.getElementById("dates");
const pct = x => (x / 1918 * 100).toFixed(3) + "%";
add(dates, "path", { d: "M2 0.5H9999", stroke: "#fff", "stroke-width": 2 });
const tick = (x, h) => add(dates, "line", { x1: pct(x), x2: pct(x), y1: 0, y2: h, stroke: "#fff" });
const label = (x, t) => add(dates, "text", { x: pct(x), y: 24, "text-anchor": "middle" }, t);
tick(109.5, 5);
tick(130.5, 10);
label(156, "8/03");
label(204, "8/04");
"8/09 8/11 8/17 8/22 8/24 8/29 8/31 9/05 9/07 9/12 9/14 9/19 9/22 9/26 9/29 10/03 10/06 10/10 10/13 10/17 10/20 10/25 10/27"
  .split(" ").forEach((t, i) => {
    tick(247.5 + i * 69, 5);
    label(274 + i * 69, t);
  });
tick(1834.5, 5);

// hand drawn notes: [strip, colour, points]
const notes = [
  [1, "#ff0", "1265,561 1240,556 1165,555 1110,563 1055,582 1005,606 975,630 975,655 988,683 1035,722 1060,733 1105,759 1190,780 1278,780 1315,750 1335,710 1347,665 1347,620 1335,585 1308,550 1260,520 1243,530 1240,545"],
  [1, "#ff0", "987,822 987,803 992,803 1000,817 1105,817 1055,865 1015,887 970,910 935,960 880,992 803,1022 850,1037 960,1065 1050,1095 1110,1110 1170,1115 1230,1135 1310,1155"],
  [1, "#ff0", "1000,817 1055,835 1132,840 1128,855 1102,890 1050,860 1000,820"],
  [1, "#ff0", "523,993 620,970 690,960 718,948 702,960"],
  [1, "#ff0", "566,985 570,1015 583,1060 588,1135 583,1136"],
  [1, "#ff0", "558,1048 706,1048 706,1054"],
  [1, "#ff0", "1180,1088 1190,1088 1192,1130 1182,1145 1182,1180 1205,1180 1300,1170 1310,1155 1240,1102 1200,1100 1260,1142"],
  [1, "#ff0", "1200,1103 1240,1130 1310,1156"],
  [1, "#ff0", "1366,1003 1362,1017 1332,1060 1323,1140 1340,1190 1410,1255 1440,1273 1483,1273 1505,1255 1527,1225 1527,1100 1515,1080 1490,1065 1440,1050 1396,1042"],
  [2, "#f00", "786,206 780,212 770,245 757,340 750,420 750,452 760,461"],
  [2, "#f00", "1020,438 1030,436 1130,380 1210,330 1254,292 1252,340 1238,410 1238,474"],
  [2, "#f00", "770,936 774,940 780,1050 783,1050"],
  [2, "#f00", "783,928 790,915 865,913 915,928 921,940 921,965 895,988 848,1005 860,1018 895,1035 918,1055 925,1072 920,1087 908,1095 793,1095 775,1098"],
  [2, "#f00", "1202,994 1222,990 1265,972 1308,938 1315,903 1308,940 1297,1020 1297,1083 1302,1087 1308,1048"],
  [2, "#f00", "822,1207 819,1370 826,1450 832,1492 815,1490 765,1410"],
  [2, "#f00", "750,1400 785,1422 835,1424 890,1373 897,1380 900,1450 885,1485 865,1486 795,1425 750,1400"],
  [3, "#f00", "492,276 489,255 493,230 520,203 560,188 604,184 604,205 545,295 540,313 548,322 590,329 632,330"],
  [3, "#ff0", "509,600 440,597 372,597 345,608 290,663 288,688 310,733 360,788 400,793 490,793 560,768 595,722 595,615 575,605 556,604"],
  [3, "#ff0", "360,785 375,775 400,780 455,790 475,810 502,810 490,738 395,793"],
  [3, "#ff0", "375,787 400,785 470,765 400,790"],
  [3, "#ff0", "470,765 440,790 420,820 385,900 360,935 315,1000 300,1060 285,1090"],
  [3, "#ff0", "525,901 553,878 545,868 480,867 455,882 442,915 442,970 450,992 468,1007 515,1007 548,975 548,942 512,943 595,928 595,921"],
  [3, "#ff0", "240,1020 260,1035 330,1031 365,1035 385,1048 408,1100 408,1135 385,1178 355,1200 310,1217 225,1220 195,1212 150,1187 132,1170 132,1110 150,1085 195,1050 240,1040 310,1034"],
  [3, "#ff0", "240,1022 265,1080 283,1098 250,1030 295,1035 360,1055 358,1065 325,1085 290,1088 265,1070 248,1028"],
  [3, "#f00", "821,923 825,917 905,897 965,902 965,910 912,990 907,1025 918,1037 1035,1075 1067,1076"],
  [3, "#f00", "324,1335 291,1485 310,1430 345,1358 380,1312 408,1288 415,1315 465,1400 500,1500 497,1508 427,1470"],
  [3, "#f00", "350,1421 547,1421"],
  [3, "#f00", "845,1250 815,1256 770,1283 740,1300 697,1355 687,1410 687,1450 705,1475 785,1528 820,1534 910,1532 970,1515 1012,1490 1015,1420 1008,1370 960,1305 915,1290 850,1285 770,1285"],
  [3, "#f00", "708,1475 780,1447 855,1392 885,1345 890,1320 885,1345 884,1460 872,1440"]
];
const ink = document.getElementById("ink");
for (const [strip, stroke, pts] of notes) {
  add(ink, "polyline", { points: line(pairs(pts, strip)), stroke });
}
add(ink, "polyline", {
  points: "1162,373 1166,363 1175,355 1199,345 1224,342 1260,342 1280,348 1288,351 1313,371 1329,402 1333,427 1333,430 1332,455 1280,467 1210,475 1163,475 1155,470 1148,455 1148,441 1157,420 1187,396 1205,383 1219,380",
  stroke: "#f00"
});
add(ink, "ellipse", { cx: 1652, cy: 324, rx: 7, ry: 6, stroke: "#f00" });

// workspace tabs
const tabs = document.getElementById("tabs");
const names = ["STOX_TF60", "STOX_TF120", "STOX TF240", "STOX _100", "STOX_TF30", "FIB_TF60", "FIB_TF120", "FIB TF240", "FIB_100", "FIB_TF30", "FIB Frame bassi", "STOXX frame bassi", "No PREZZI", "Posizioni1", "Untitled Workspace:  6"];
function edge(d) {
  add(add(tabs, "svg", { class: "tab-edge" }), "path", { d });
}
names.forEach((name, i) => {
  const active = i === names.length - 1;
  edge(i === 0 ? "M0 0l6 17M6 16.5h3M0 .5h9" : "M2 0l6 17M5 9l-3 8M0 16.5h2M0 .5h9M7 16.5h2");
  const b = document.createElement("button");
  b.className = "tab" + (i > 9 ? " tab-wide" : "") + (active ? " tab-active" : "");
  b.textContent = name.replace("  ", "\u00a0 ");
  tabs.appendChild(b);
});
edge("M6 0L1 17M6 .5h3M0 16.5h1");
const rest = document.createElement("div");
rest.className = "tab-rest";
tabs.appendChild(rest);
```
